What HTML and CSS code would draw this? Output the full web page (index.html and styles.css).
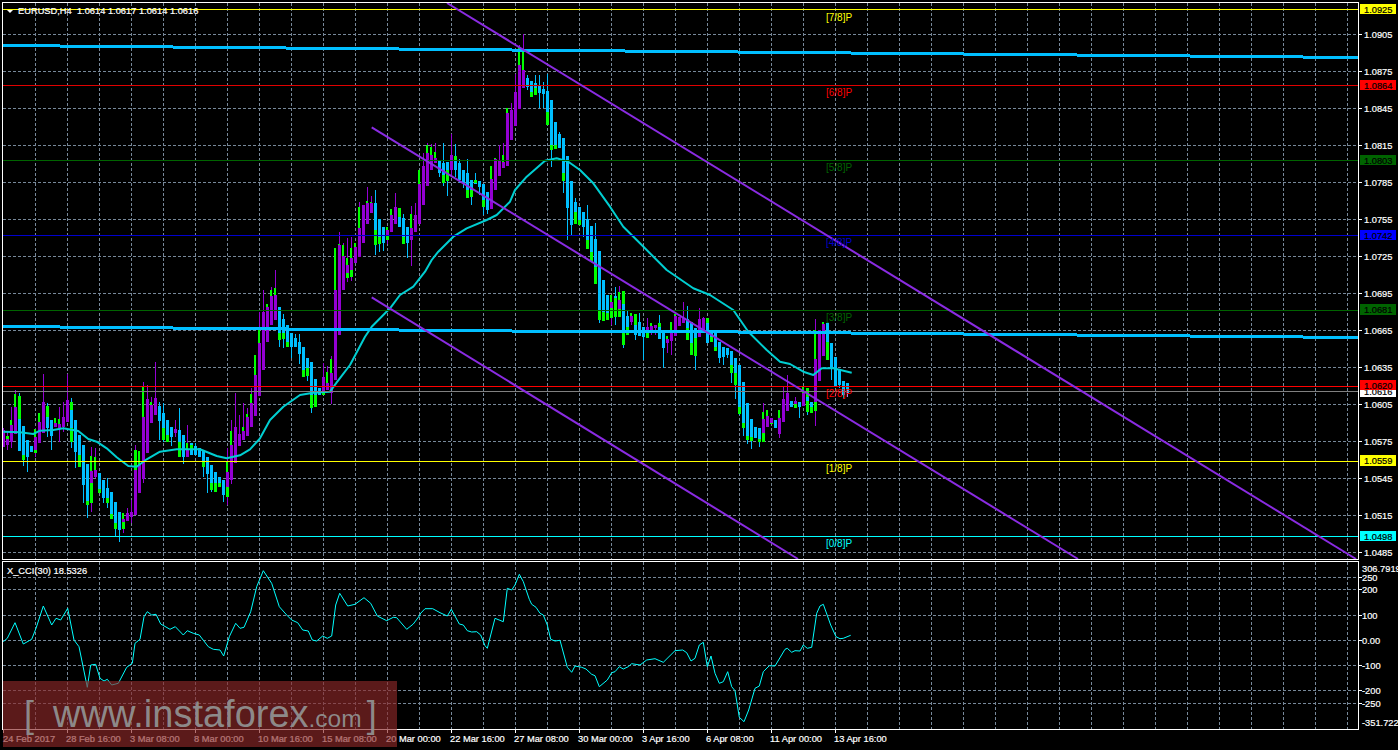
FILE: index.html
```html
<!DOCTYPE html>
<html lang="en">
<head>
<meta charset="utf-8">
<title>EURUSD,H4</title>
<link rel="stylesheet" href="styles.css">
</head>
<body>
<main class="terminal">
  <svg class="chart" id="chart" viewBox="0 0 1398 750" width="1398" height="750" xmlns="http://www.w3.org/2000/svg">
    <g id="layer-grid"></g>
    <g id="layer-candles"></g>
    <g id="layer-lines"></g>

    <g class="frame">
      <rect x="2.5" y="2.5" width="1356" height="557"></rect>
      <rect x="2.5" y="561.5" width="1356" height="168"></rect>
    </g>
    <g id="layer-ticks"></g>

    <polygon class="arrow" points="7,10 13,10 10,13"></polygon>
    <text class="label" x="18" y="14">EURUSD,H4  1.0614 1.0617 1.0614 1.0616</text>
    <text class="label" x="7" y="574">X_CCI(30) 18.5326</text>

    <g class="murray">
      <text class="m-yellow" x="826" y="21">[7/8]P</text>
      <text class="m-red" x="826" y="96">[6/8]P</text>
      <text class="m-dgreen" x="826" y="171">[5/8]P</text>
      <text class="m-blue" x="826" y="246">[4/8]P</text>
      <text class="m-dgreen" x="826" y="321">[3/8]P</text>
      <text class="m-red" x="826" y="397">[2/8]P</text>
      <text class="m-yellow" x="826" y="472">[1/8]P</text>
      <text class="m-cyan" x="826" y="547">[0/8]P</text>
    </g>

    <g class="axis">
      <text x="1364" y="38">1.0905</text>
      <text x="1364" y="75">1.0875</text>
      <text x="1364" y="112">1.0845</text>
      <text x="1364" y="149">1.0815</text>
      <text x="1364" y="186">1.0785</text>
      <text x="1364" y="223">1.0755</text>
      <text x="1364" y="260">1.0725</text>
      <text x="1364" y="297">1.0695</text>
      <text x="1364" y="334">1.0665</text>
      <text x="1364" y="371">1.0635</text>
      <text x="1364" y="408">1.0605</text>
      <text x="1364" y="445">1.0575</text>
      <text x="1364" y="482">1.0545</text>
      <text x="1364" y="519">1.0515</text>
      <text x="1364" y="556">1.0485</text>

      <text x="1362" y="572">306.7919</text>
      <text x="1362" y="581">250</text>
      <text x="1362" y="593">200</text>
      <text x="1362" y="619">100</text>
      <text x="1362" y="644">0.00</text>
      <text x="1362" y="669">-100</text>
      <text x="1362" y="694">-200</text>
      <text x="1362" y="707">-250</text>
      <text x="1362" y="726">-351.722</text>

      <text x="3" y="742">24 Feb 2017</text>
      <text x="66" y="742">28 Feb 16:00</text>
      <text x="130" y="742">3 Mar 08:00</text>
      <text x="194" y="742">8 Mar 00:00</text>
      <text x="258" y="742">10 Mar 16:00</text>
      <text x="322" y="742">15 Mar 08:00</text>
      <text x="386" y="742">20 Mar 00:00</text>
      <text x="450" y="742">22 Mar 16:00</text>
      <text x="514" y="742">27 Mar 08:00</text>
      <text x="578" y="742">30 Mar 00:00</text>
      <text x="642" y="742">3 Apr 16:00</text>
      <text x="706" y="742">6 Apr 08:00</text>
      <text x="770" y="742">11 Apr 00:00</text>
      <text x="834" y="742">13 Apr 16:00</text>
    </g>

    <g class="tags">
      <rect class="t-yellow" x="1360" y="4" width="36" height="10"></rect>
      <text x="1364" y="12.5">1.0925</text>
      <rect class="t-red" x="1360" y="80" width="36" height="10"></rect>
      <text x="1364" y="88.5">1.0864</text>
      <rect class="t-green" x="1360" y="155" width="36" height="10"></rect>
      <text x="1364" y="163.5">1.0803</text>
      <rect class="t-blue" x="1360" y="230" width="36" height="10"></rect>
      <text x="1364" y="238.5">1.0742</text>
      <rect class="t-green" x="1360" y="304" width="36" height="11"></rect>
      <text x="1364" y="313">1.0681</text>
      <rect class="t-white" x="1360" y="386" width="36" height="11"></rect>
      <text x="1364" y="395">1.0616</text>
      <rect class="t-red" x="1360" y="380" width="36" height="10"></rect>
      <text x="1364" y="388.5">1.0620</text>
      <rect class="t-yellow" x="1360" y="455" width="36" height="11"></rect>
      <text x="1364" y="464">1.0559</text>
      <rect class="t-cyan" x="1360" y="531" width="36" height="10"></rect>
      <text x="1364" y="539.5">1.0498</text>
    </g>
  </svg>

  <div class="watermark">
    <span class="wm-bracket">[</span>
    <span class="wm-main">www.instaforex</span>
    <span class="wm-com">.com</span>
    <span class="wm-bracket wm-close">]</span>
  </div>
</main>
<script src="chart.js"></script>
</body>
</html>
```
FILE: styles.css
```css
html, body {
  margin: 0;
  padding: 0;
  background: #000;
}
.terminal {
  position: relative;
  width: 1398px;
  height: 750px;
  overflow: hidden;
  background: #000;
}
.chart {
  display: block;
}
.chart text {
  font-family: "Liberation Sans", Arial, sans-serif;
  font-size: 9.3px;
  white-space: pre;
  stroke-width: 0.2px;
}
.grid-line {
  stroke: #778899;
  stroke-width: 1;
  stroke-dasharray: 3 2;
  shape-rendering: crispEdges;
  fill: none;
}
.frame rect {
  fill: none;
  stroke: #fff;
  stroke-width: 1;
  shape-rendering: crispEdges;
}
.tick {
  stroke: #fff;
  stroke-width: 1;
  shape-rendering: crispEdges;
}
.arrow { fill: #fff; }
.label { fill: #fff; stroke: #fff; }
.axis text { fill: #fff; stroke: #fff; }
.tags text { fill: #000; stroke: #000; }
.tags rect { shape-rendering: crispEdges; }
.t-yellow { fill: #ffff00; }
.t-red { fill: #ff0000; }
.t-green { fill: #006400; }
.t-blue { fill: #0000ff; }
.t-white { fill: #ffffff; }
.t-cyan { fill: #00ffff; }

.murray text { font-size: 10px; }
.m-yellow { fill: #ffff00; }
.m-red { fill: #ff0000; }
.m-dgreen { fill: #006400; }
.m-blue { fill: #0000cd; }
.m-cyan { fill: #00ffff; }

.wick, .body { shape-rendering: crispEdges; }
.c-p { fill: #9400d3; }
.c-b { fill: #00bfff; }
.c-l { fill: #00ff00; }

.level { stroke-width: 1; shape-rendering: crispEdges; }
.l-yellow { stroke: #ffff00; }
.l-red { stroke: #e00000; }
.l-bright { stroke: #ff0000; }
.l-green { stroke: #006400; }
.l-blue { stroke: #0000cd; }
.l-gray { stroke: #808080; }
.l-cyan { stroke: #00ffff; }

.band { fill: #00bfff; shape-rendering: crispEdges; }
.channel { stroke: #8a2be2; stroke-width: 2; fill: none; }
.ema { stroke: #00ced1; stroke-width: 2; fill: none; stroke-linejoin: round; }
.cci { stroke: #00ffff; stroke-width: 1; fill: none; }

.watermark {
  position: absolute;
  left: 3px;
  top: 681px;
  width: 394px;
  height: 66px;
  box-sizing: border-box;
  padding-left: 21px;
  display: flex;
  align-items: baseline;
  background: rgba(140, 40, 40, 0.65);
  color: rgba(145, 145, 145, 0.95);
  font-family: "Liberation Sans", Arial, sans-serif;
  line-height: 66px;
}
.wm-bracket {
  font-size: 36px;
  font-weight: 400;
}
.wm-main {
  font-size: 38px;
  margin-left: 19px;
}
.wm-com {
  font-size: 24.5px;
}
.wm-close {
  margin-left: 5px;
}
```
FILE: chart.js
```js
(function () {
  var NS = 'http://www.w3.org/2000/svg';
  function el(parent, tag, cls, attrs) {
    var n = document.createElementNS(NS, tag);
    if (cls) n.setAttribute('class', cls);
    for (var k in attrs) n.setAttribute(k, attrs[k]);
    parent.appendChild(n);
    return n;
  }
  var grid = document.getElementById('layer-grid');
  var candles = document.getElementById('layer-candles');
  var lines = document.getElementById('layer-lines');
  var ticks = document.getElementById('layer-ticks');

  // ---- grid
  var i, y;
  for (i = 0; i <= 41; i++) {
    var gx = 35.5 + 32 * i;
    el(grid, 'line', 'grid-line', { x1: gx, y1: 3, x2: gx, y2: 559 });
    el(grid, 'line', 'grid-line', { x1: gx, y1: 562, x2: gx, y2: 729 });
  }
  for (i = 0; i < 15; i++) {
    y = 34.5 + 37 * i;
    el(grid, 'line', 'grid-line', { x1: 3, y1: y, x2: 1358, y2: y });
    el(ticks, 'line', 'tick', { x1: 1359, y1: y, x2: 1362, y2: y });
  }
  [577.5, 589.5, 615.5, 640.5, 665.5, 690.5, 703.5].forEach(function (v) {
    el(grid, 'line', 'grid-line', { x1: 3, y1: v, x2: 1358, y2: v });
    el(ticks, 'line', 'tick', { x1: 1359, y1: v, x2: 1362, y2: v });
  });
  for (i = 0; i < 14; i++) {
    var tx = 3.5 + 64 * i;
    el(ticks, 'line', 'tick', { x1: tx, y1: 730, x2: tx, y2: 733 });
  }

  // ---- candles: [zoomX, colour, bodyTop, bodyBottom, wickTop, wickBottom, limeTop, limeBottom, limeTop2, limeBottom2]
  var s1 = [
    [12,'p',210,260,205,262],[22,'p',228,255,215,270,228,238],[34,'p',195,245,140,265,180,195],[46,'p',140,222,90,222,102,140],
    [58,'b',178,272,100,272,108,178],[70,'b',198,285,198,318,285,300],[82,'b',240,290,240,335],[94,'b',258,276,258,276],
    [106,'p',232,270,205,290,207,232,270,280],[118,'p',185,250,160,250,160,185],[130,'p',125,220,42,220],[142,'b',172,205,130,230,138,172],
    [154,'b',180,228,180,270],[166,'p',190,200,174,200,174,190],[178,'p',193,205,140,245,178,193],[190,'p',170,200,125,215],
    [202,'p',120,187,42,187],[214,'b',150,245,115,265,126,150,205,245],[226,'b',180,275,180,325],[238,'b',225,285,225,320,285,320],
    [250,'b',255,375,255,430],[262,'b',312,422,312,475,422,435],[274,'p',333,370,260,455,288,333,370,430],[286,'p',330,352,265,355,291,330],
    [298,'b',340,388,340,398,388,398],[310,'b',360,413,360,430],[322,'b',385,415,355,445,415,430],[334,'b',396,462,396,476,462,476],
    [346,'b',427,490,427,530,490,506],[358,'b',456,510,456,545],[370,'p',478,485,460,520,460,478,485,506],[382,'p',460,482,445,482],
    [394,'p',456,470,420,488],[406,'p',310,465,255,465,270,330],[418,'p',312,398,272,398,272,312],[430,'p',170,357,65,368,80,170],
    [442,'p',118,280,75,280],[454,'p',135,190,110,190,125,135],[466,'p',113,165,5,165],[478,'b',138,182,126,240],
    [490,'b',160,205,128,245,205,240],[502,'b',180,225,180,245,225,245],[514,'b',200,230,200,258],[526,'p',207,220,180,232],
    [538,'b',210,245,145,292,245,290],[550,'b',225,292,225,313],[562,'p',270,290,195,290,250,270],[574,'b',250,285,250,285,255,270],
    [586,'b',258,285,250,285],[598,'b',265,292,265,292],[610,'b',272,305,272,350,305,320],[622,'b',290,342,290,398],
    [634,'b',315,370,315,395,370,390],[646,'b',335,370,335,395,370,395],[658,'b',350,370,350,380,370,380],[670,'b',360,405,360,425],
    [682,'p',335,380,265,435,305,335,380,410],[694,'p',255,360,180,372,213,255],[706,'p',200,308,98,308],[718,'p',222,258,165,258],
    [730,'p',213,240,130,240,200,213],[742,'p',170,228,145,228,162,170],[754,'p',130,202,85,202,102,130]
  ];
  var s2 = [
    [16,'p',765,888,705,888,705,765],[28,'p',670,828,575,828,625,670],[40,'p',575,750,510,750],[52,'p',560,665,552,665,552,560],
    [64,'p',528,615,502,615,510,528],[76,'p',525,600,450,600,505,525],[88,'b',562,640,562,680,640,660],[100,'b',597,640,582,685,640,658],
    [112,'b',615,665,615,682,665,682],[124,'b',640,682,640,715],[136,'b',655,680,642,680],[148,'b',666,702,642,732],
    [160,'b',682,750,682,772,750,772],[172,'b',714,745,714,782,745,768],[184,'b',726,825,726,878,825,865],[196,'b',778,825,778,862,825,862],
    [208,'b',805,825,805,825],[220,'p',772,815,730,825,815,825],[232,'p',790,810,738,810,755,790],[244,'p',760,820,708,852,716,760],
    [256,'p',510,780,385,780,385,510],[268,'p',375,645,335,645,373,375],[280,'p',408,510,370,510,375,408],[292,'p',435,460,355,485,415,435,460,475],
    [304,'p',415,450,352,482,385,415,450,470],[316,'p',380,430,368,430,368,380],[328,'p',325,410,245,410,262,325],[340,'p',255,370,255,370],
    [352,'p',250,312,200,312,244,250],[364,'p',250,278,228,278,246,250],[376,'b',250,330,210,405,330,375],[388,'b',298,350,298,395,350,372],
    [400,'b',320,370,320,392],[412,'p',330,345,320,372,320,330,345,360],[424,'p',285,335,266,335,266,285],[436,'p',262,312,220,312],
    [448,'b',290,320,265,320,265,290],[460,'b',295,350,282,372,350,372],[472,'b',320,370,320,415],[484,'p',325,360,258,438,282,325],
    [496,'p',285,335,250,335],[508,'p',192,312,150,312,150,192],[520,'p',138,255,98,255],[532,'p',100,198,68,198,76,100],
    [544,'p',105,150,72,150,80,105],[556,'p',115,130,70,130,96,115],[568,'b',123,160,123,170],[580,'b',130,165,68,198,165,188],
    [592,'b',125,150,125,228,150,183],[604,'p',105,150,42,165],[616,'b',122,150,72,170,108,122],[628,'b',130,180,118,190],
    [640,'b',150,190,150,205],[652,'b',158,210,118,233,210,233],[664,'b',180,210,180,255,210,232],[676,'b',190,192,158,192,180,190],
    [688,'b',183,200,183,225],[700,'b',192,240,192,285,240,260],[712,'b',216,270,216,283],[724,'p',178,268,178,268,138,178],
    [736,'p',118,210,114,210,114,118],[748,'p',122,168,75,168],[760,'p',125,145,68,145,105,125]
  ];
  var s3 = [
    [52,'p',250,408,235,408,235,250],[64,'p',240,330,220,330],[76,'p',185,288,132,288],[88,'p',105,236,45,236,50,105],
    [100,'p',120,175,12,175,62,120],[112,'b',145,170,135,180],[124,'b',152,185,152,200,185,200],[136,'b',160,175,135,195,175,195],
    [148,'b',165,190,135,235],[160,'b',178,192,155,235],[172,'b',183,245,132,285,245,285],[184,'b',210,345,210,410,345,360],
    [196,'b',276,345,276,358,345,358],[208,'b',312,355,305,355],[220,'b',324,430,324,488,430,452],[232,'b',378,535,378,630],
    [244,'b',453,585,453,615],[256,'b',516,545,505,582,545,582],[268,'b',531,570,531,585,570,585],[280,'b',545,590,545,620],
    [292,'b',568,630,525,658,630,658],[304,'b',588,665,588,695,665,695],[316,'b',627,710,580,762,710,762],[328,'b',663,842,663,880,842,870],
    [340,'b',750,845,750,872,845,872],[352,'b',795,850,795,870,850,870],[364,'p',815,835,795,885,795,815,835,865],[376,'b',798,860,770,885,805,860],
    [388,'p',810,838,768,860,785,810,838,860],[400,'b',822,900,783,955,783,822,900,945],[412,'b',858,890,840,915,890,915],[424,'p',858,875,850,885,850,858],
    [436,'b',885,915,852,930,852,885],[448,'b',875,918,850,918],[460,'b',890,920,890,990],[472,'p',892,905,865,925,905,925],
    [484,'p',888,900,880,915,880,888],[496,'p',885,895,885,915],[508,'b',892,928,855,928,880,892],[520,'b',905,955,905,1015],
    [532,'p',928,938,918,970,918,928],[544,'p',905,932,875,975,875,905],[556,'p',858,918,852,918,852,858],[568,'p',860,888,860,888],
    [580,'p',865,880,815,880],[592,'b',868,895,828,930,895,930],[604,'b',875,940,875,975,940,975],[616,'b',895,925,895,1020,925,978],
    [628,'p',868,920,835,920],[640,'p',865,900,862,900],[652,'b',880,940,865,940,865,880],[664,'b',905,920,905,935,920,935],
    [676,'b',910,950,910,962,950,962],[688,'b',935,985,935,1000]
  ];
  var s4 = [
    [70,'b',140,172,140,195],[82,'b',145,165,145,175],[94,'b',152,195,152,250,195,218],[106,'b',175,218,175,298,218,255],
    [118,'b',195,320,195,345,320,342],[130,'b',245,370,245,408,370,384],[142,'b',308,408,308,432,408,420],[154,'b',358,410,358,448,410,422],
    [166,'b',380,415,380,415],[178,'b',385,418,385,440,418,425],[190,'p',358,400,310,425,335,358,400,425],[202,'p',348,382,330,382,330,348],
    [214,'p',353,368,353,372,368,372],[226,'b',360,383,360,383],[238,'p',353,402,330,415,330,353],[250,'p',298,365,262,365],
    [262,'p',280,333,225,333],[274,'b',302,320,302,320],[286,'p',302,312,292,325,312,325],[298,'b',307,322,307,355],
    [310,'p',280,318,260,318,260,280],[322,'b',290,303,265,345,265,290,303,335],[334,'b',305,320,305,338,320,338],[346,'p',178,305,57,378,90,178,305,332],
    [358,'p',90,243,90,243],[370,'p',72,168,65,168,65,72],[382,'b',68,125,68,180,125,180],[394,'b',130,205,130,240],
    [406,'b',172,260,172,260],[418,'b',208,255,208,265],[430,'b',243,285,243,298],[442,'b',248,280,248,290]
  ];

  function section(data, bx, by) {
    data.forEach(function (d) {
      var x = bx + d[0] / 3;
      var cx = 3 + 4 * Math.round((x - 3.3) / 4);
      function Y(z) { return by + z / 3; }
      var col = 'c-' + d[1];
      var wt = Math.round(Y(Math.min(d[2], d[4] === undefined ? d[2] : d[4])));
      var wb = Math.round(Y(Math.max(d[3], d[5] === undefined ? d[3] : d[5])));
      el(candles, 'rect', 'wick ' + col, { x: cx, y: wt, width: 1, height: Math.max(1, wb - wt) });
      var bt = Math.round(Y(d[2])), bb = Math.round(Y(d[3]));
      el(candles, 'rect', 'body ' + col, { x: cx - 1, y: bt, width: 3, height: Math.max(1, bb - bt) });
      for (var j = 6; j + 1 < d.length; j += 2) {
        var lt = Math.round(Y(d[j])), lb = Math.round(Y(d[j + 1]));
        var narrow = d[1] === 'p' && lb <= bt;
        el(candles, 'rect', 'body c-l', { x: cx - 1, y: lt, width: narrow ? 2 : 3, height: Math.max(1, lb - lt) });
      }
    });
  }
  section(s1, 0, 360);
  section(s2, 250, 120);
  section(s3, 490, 30);
  section(s4, 700, 300);

  // ---- moving average
  function pts(list, bx, by) {
    return list.map(function (p) {
      return (bx + p[0] / 3).toFixed(1) + ',' + (by + p[1] / 3).toFixed(1);
    }).join(' ');
  }
  var ema = [
    pts([[10,215],[60,217],[100,222],[120,212],[160,210],[190,205],[235,213],[265,237],[290,245],[320,265],[350,292],[385,318],[410,320],[440,298],[480,275],[530,268],[600,268],[650,288],[680,295],[720,286],[750,268],[780,235]], 0, 360),
    pts([[60,900],[100,860],[150,825],[190,818],[240,815],[262,785],[300,735],[345,650],[365,620],[420,565],[450,525],[490,500],[525,455],[545,420],[565,395],[610,350],[650,325],[710,300],[740,285],[780,245]], 250, 120),
    pts([[75,480],[110,440],[165,392],[200,385],[235,395],[270,420],[310,460],[360,530],[400,590],[440,630],[530,720],[610,775],[660,795],[730,840],[775,905]], 490, 30),
    pts([[200,150],[240,185],[270,192],[310,215],[340,225],[365,205],[400,205],[455,218]], 700, 300)
  ].join(' ');
  el(lines, 'polyline', 'ema', { points: ema });

  // ---- stepped bands
  function band(y0, step) {
    var x = 3, k = 0, next = 60;
    while (x < 1358) {
      var end = Math.min(next, 1358);
      el(lines, 'rect', 'band', { x: x, y: Math.round(y0 + k * step) - 1, width: end - x, height: 3 });
      x = end; next += 113; k++;
    }
  }
  band(45, 1.03);
  band(325.6, 0.98);

  // ---- level lines
  [[9.5,'l-yellow'],[85.5,'l-red'],[160.5,'l-green'],[235.5,'l-blue'],[310.5,'l-green'],[391.5,'l-gray'],[386.5,'l-bright'],[461.5,'l-yellow'],[536.5,'l-cyan']].forEach(function (l) {
    el(lines, 'line', 'level ' + l[1], { x1: 3, y1: l[0], x2: 1358, y2: l[0] });
  });

  // ---- channel
  el(lines, 'line', 'channel', { x1: 447, y1: 3, x2: 1356, y2: 559 });
  el(lines, 'line', 'channel', { x1: 371.7, y1: 127.3, x2: 1078, y2: 559 });
  el(lines, 'line', 'channel', { x1: 371.7, y1: 297.3, x2: 798, y2: 559 });

  // ---- CCI
  var cci = [
    pts([[10,275],[22,265],[45,218],[70,282],[95,268],[108,235],[130,168],[155,225],[168,205],[182,210],[203,175],[222,270],[237,290],[262,412],[272,345],[287,343],[300,385],[312,393],[322,388],[335,405],[355,400],[380,352],[397,340],[405,280],[420,268],[432,200],[442,185],[455,195],[468,193],[482,222],[510,238],[526,230],[550,255],[562,242],[580,250],[598,255],[625,290],[640,298],[660,300],[671,318],[688,260],[707,220],[720,235],[732,232],[752,185],[770,110],[790,62],[815,100],[838,170],[860,195],[875,210],[893,218],[908,240],[925,243],[937,270],[950,273],[968,258],[982,265],[995,258],[1007,165],[1019,130],[1043,168],[1065,163],[1092,143],[1112,160],[1132,198],[1160,212],[1180,202],[1190,203],[1220,238],[1240,222],[1260,195]], 0, 550),
    pts([[30,162],[45,146],[68,146],[90,158],[112,168],[124,148],[148,192],[160,195],[172,212],[185,216],[200,215],[212,225],[225,257],[232,265],[255,175],[280,185],[292,85],[305,90],[315,75],[328,43],[340,65],[358,118],[365,133],[378,142],[390,160],[400,165],[412,195],[422,238],[435,243],[450,241],[472,322],[485,337],[495,318],[515,322],[528,327],[545,343],[555,347],[568,380],[592,360],[605,338],[615,335],[628,320],[640,327],[655,320],[665,311],[690,315]], 410, 560),
    pts([[50,300],[75,296],[100,307],[135,272],[158,270],[170,278],[183,303],[195,295],[208,255],[220,247],[232,320],[243,288],[255,340],[268,370],[280,365],[293,335],[305,380],[315,392],[328,472],[342,485],[356,450],[375,385],[388,378],[400,335],[418,317],[435,318],[465,268],[472,265],[485,277],[495,272],[510,273],[520,255],[532,265],[545,262],[560,160],[570,138],[580,133],[602,195],[618,230],[630,236],[640,235],[662,226]], 630, 560)
  ].join(' ');
  el(lines, 'polyline', 'cci', { points: cci });
})();
```
